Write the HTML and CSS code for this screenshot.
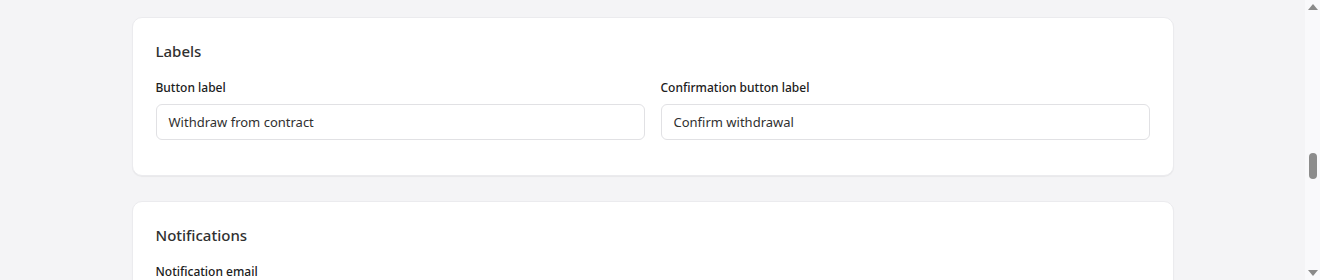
FILE: index.html
```html
<!DOCTYPE html>
<html>
<head>
<meta charset="utf-8">
<link rel="stylesheet" href="styles.css">
</head>
<body>
<div class="page">
  <main class="content">
    <section class="card">
      <h2 class="card-title">Labels</h2>
      <div class="grid">
        <div class="field">
          <label class="field-label">Button label</label>
          <div class="input">Withdraw from contract</div>
        </div>
        <div class="field">
          <label class="field-label">Confirmation button label</label>
          <div class="input">Confirm withdrawal</div>
        </div>
      </div>
    </section>
    <section class="card">
      <h2 class="card-title">Notifications</h2>
      <div class="field">
        <label class="field-label">Notification email</label>
        <div class="input">&nbsp;</div>
      </div>
    </section>
  </main>
  <aside class="scrollbar">
    <span class="arrow up"></span>
    <span class="track"><span class="thumb"></span></span>
    <span class="arrow down"></span>
  </aside>
</div>
</body>
</html>
```
FILE: styles.css
```css
* { box-sizing: border-box; }
html, body { margin: 0; padding: 0; }
body {
  font-family: "Noto Sans", "Open Sans", sans-serif;
  color: #303030;
  background: #f4f4f6;
  height: 280px;
  overflow: hidden;
}
.page {
  display: flex;
  height: 280px;
}
.content {
  flex: 1;
  display: flex;
  flex-direction: column;
  align-items: center;
  gap: 25px;
  padding-top: 17px;
}
.card {
  width: 1042px;
  background: #fff;
  border-radius: 10px;
  border: 1px solid #ebebee;
  box-shadow: 0 1px 1px rgba(0,0,0,0.05);
  padding: 23px 23px 35px;
  flex-shrink: 0;
}
.card-title {
  margin: 0 0 19px;
  font-size: 15px;
  font-weight: 500;
  line-height: 20px;
  color: #303030;
}
.grid {
  display: grid;
  grid-template-columns: 1fr 1fr;
  gap: 16px;
}
.field {
  display: flex;
  flex-direction: column;
  gap: 8px;
}
.field-label {
  font-size: 12px;
  font-weight: 500;
  line-height: 16px;
  color: #202020;
}
.input {
  height: 36px;
  border: 1px solid #e1e1e4;
  border-radius: 6px;
  padding: 0 12px;
  font-size: 13px;
  line-height: 34px;
  color: #303030;
}
.scrollbar {
  width: 15px;
  flex-shrink: 0;
  background: #f9f9fb;
  display: flex;
  flex-direction: column;
  align-items: center;
  padding: 4px 0;
}
.arrow {
  width: 0; height: 0;
  border-left: 5px solid transparent;
  border-right: 5px solid transparent;
}
.arrow.up { border-bottom: 6px solid #8a8a8a; }
.arrow.down { border-top: 6px solid #8a8a8a; }
.track {
  flex: 1;
  width: 100%;
  display: flex;
  justify-content: center;
  padding-top: 143px;
}
.thumb {
  width: 8px;
  height: 26px;
  border-radius: 4px;
  background: #8c8c8c;
}
```
